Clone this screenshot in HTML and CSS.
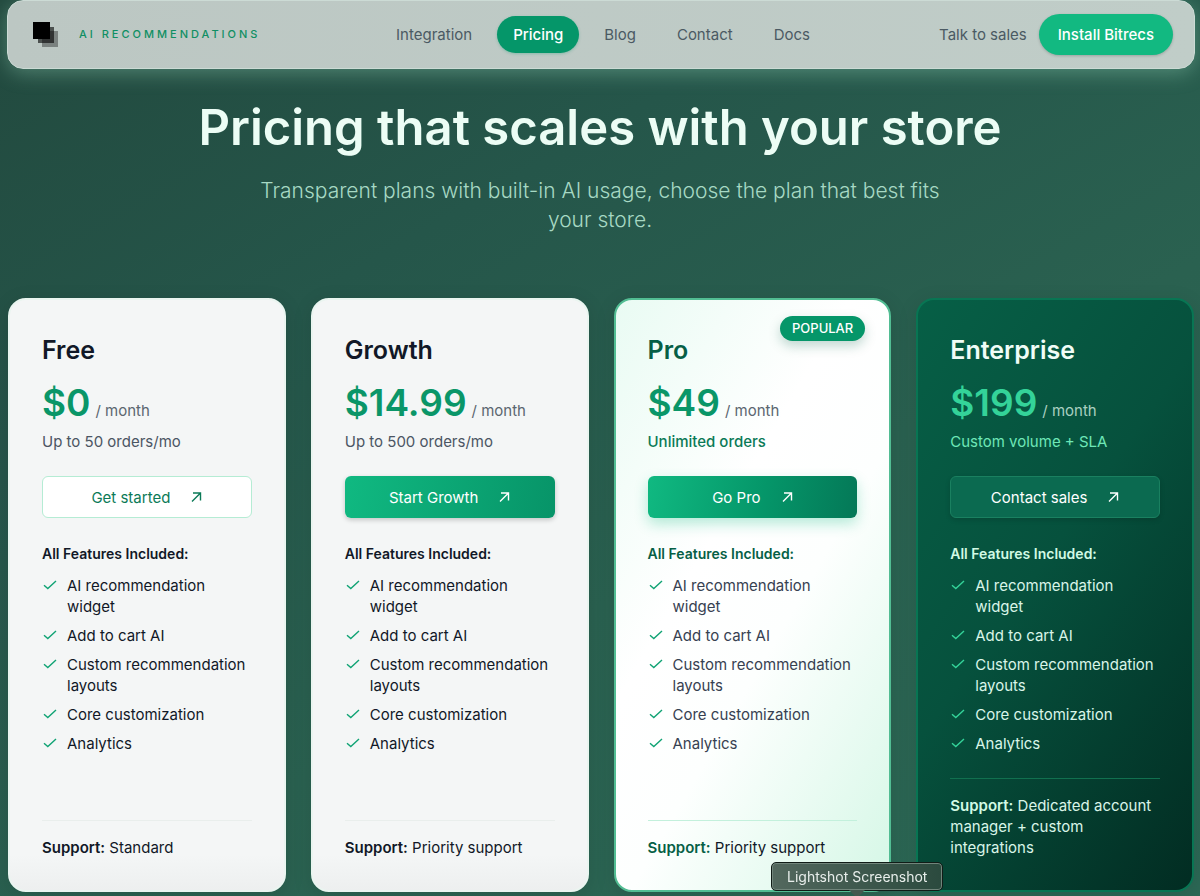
FILE: index.html
```html
<!DOCTYPE html>
<html lang="en">
<head>
  <meta charset="UTF-8">
  <meta name="viewport" content="width=device-width, initial-scale=1.0">
  <title>Pricing - Bitrecs</title>
  <link rel="stylesheet" href="styles.css">
</head>
<body>
  <svg class="sprite" aria-hidden="true">
    <symbol id="arrow" viewBox="0 0 12 12">
      <path d="M2 10.5 10 2.5M3 2h7.5v7.5" fill="none" stroke="currentColor" stroke-width="1.4"/>
    </symbol>
    <symbol id="check" viewBox="0 0 16 16">
      <path d="M2 8.2 5.8 11.6 14 4" fill="none" stroke="currentColor" stroke-width="1.4"/>
    </symbol>
  </svg>

  <header class="navbar">
    <a class="brand" href="#">
      <svg class="logo" viewBox="0 0 26 26" aria-hidden="true">
        <rect x="9" y="9" width="16" height="16" fill="#000" opacity="0.35"/>
        <rect x="5" y="5" width="16" height="16" fill="#000" opacity="0.6"/>
        <rect x="0" y="0" width="17" height="17" fill="#000"/>
      </svg>
      <span class="brand-text">AI RECOMMENDATIONS</span>
    </a>
    <nav class="nav-links">
      <a href="#">Integration</a>
      <a href="#" class="active">Pricing</a>
      <a href="#">Blog</a>
      <a href="#">Contact</a>
      <a href="#">Docs</a>
    </nav>
    <div class="nav-actions">
      <a href="#">Talk to sales</a>
      <a href="#" class="install">Install Bitrecs</a>
    </div>
  </header>

  <main>
    <section class="hero">
      <h1>Pricing that scales with your store</h1>
      <p>Transparent plans with built-in AI usage, choose the plan that best fits your store.</p>
    </section>

    <section class="plans">
      <article class="card">
        <h2>Free</h2>
        <div class="price"><strong>$0</strong><span>/ month</span></div>
        <p class="volume">Up to 50 orders/mo</p>
        <button type="button" class="cta cta-outline">Get started <svg><use href="#arrow"/></svg></button>
        <h3>All Features Included:</h3>
        <ul>
          <li><svg><use href="#check"/></svg><span>AI recommendation widget</span></li>
          <li><svg><use href="#check"/></svg><span>Add to cart AI</span></li>
          <li><svg><use href="#check"/></svg><span>Custom recommendation layouts</span></li>
          <li><svg><use href="#check"/></svg><span>Core customization</span></li>
          <li><svg><use href="#check"/></svg><span>Analytics</span></li>
        </ul>
        <p class="support"><b>Support:</b> Standard</p>
      </article>

      <article class="card">
        <h2>Growth</h2>
        <div class="price"><strong>$14.99</strong><span>/ month</span></div>
        <p class="volume">Up to 500 orders/mo</p>
        <button type="button" class="cta cta-growth">Start Growth <svg><use href="#arrow"/></svg></button>
        <h3>All Features Included:</h3>
        <ul>
          <li><svg><use href="#check"/></svg><span>AI recommendation widget</span></li>
          <li><svg><use href="#check"/></svg><span>Add to cart AI</span></li>
          <li><svg><use href="#check"/></svg><span>Custom recommendation layouts</span></li>
          <li><svg><use href="#check"/></svg><span>Core customization</span></li>
          <li><svg><use href="#check"/></svg><span>Analytics</span></li>
        </ul>
        <p class="support"><b>Support:</b> Priority support</p>
      </article>

      <article class="card card-pro">
        <span class="badge">POPULAR</span>
        <h2>Pro</h2>
        <div class="price"><strong>$49</strong><span>/ month</span></div>
        <p class="volume">Unlimited orders</p>
        <button type="button" class="cta cta-pro">Go Pro <svg><use href="#arrow"/></svg></button>
        <h3>All Features Included:</h3>
        <ul>
          <li><svg><use href="#check"/></svg><span>AI recommendation widget</span></li>
          <li><svg><use href="#check"/></svg><span>Add to cart AI</span></li>
          <li><svg><use href="#check"/></svg><span>Custom recommendation layouts</span></li>
          <li><svg><use href="#check"/></svg><span>Core customization</span></li>
          <li><svg><use href="#check"/></svg><span>Analytics</span></li>
        </ul>
        <p class="support"><b>Support:</b> Priority support</p>
      </article>

      <article class="card card-enterprise">
        <h2>Enterprise</h2>
        <div class="price"><strong>$199</strong><span>/ month</span></div>
        <p class="volume">Custom volume + SLA</p>
        <button type="button" class="cta cta-enterprise">Contact sales <svg><use href="#arrow"/></svg></button>
        <h3>All Features Included:</h3>
        <ul>
          <li><svg><use href="#check"/></svg><span>AI recommendation widget</span></li>
          <li><svg><use href="#check"/></svg><span>Add to cart AI</span></li>
          <li><svg><use href="#check"/></svg><span>Custom recommendation layouts</span></li>
          <li><svg><use href="#check"/></svg><span>Core customization</span></li>
          <li><svg><use href="#check"/></svg><span>Analytics</span></li>
        </ul>
        <p class="support"><b>Support:</b> Dedicated account manager + custom integrations</p>
      </article>
    </section>
  </main>

  <div class="tooltip" role="tooltip">Lightshot Screenshot</div>
</body>
</html>
```
FILE: styles.css
```css
* {
  box-sizing: border-box;
}

body, h1, h2, h3, p, ul {
  margin: 0;
  padding: 0;
}

body {
  min-height: 100vh;
  font-family: Inter, "Open Sans", sans-serif;
  font-size: 15px;
  line-height: 21px;
  color: #111827;
  background: linear-gradient(150deg, #22493e 0%, #25564a 30%, #2a6150 60%, #2c6855 100%);
}

a {
  color: inherit;
  text-decoration: none;
}

.sprite {
  position: absolute;
  width: 0;
  height: 0;
}

/* Navbar */
.navbar {
  display: grid;
  grid-template-columns: 1fr auto 1fr;
  align-items: center;
  height: 69px;
  margin: 0 5px 0 7px;
  padding: 0 21px 0 25px;
  background: linear-gradient(90deg, #bcc7c3, #c0cdc8);
  border: 1px solid #ccdbd5;
  border-radius: 16px;
  box-shadow: 0 4px 20px rgba(167, 230, 200, 0.35);
  color: #4b5a63;
}
.brand {
  display: flex;
  align-items: center;
  gap: 20px;
}
.logo {
  width: 26px;
  height: 26px;
}
.brand-text {
  font-size: 11px;
  font-weight: 500;
  letter-spacing: 3px;
  color: #0f8f63;
}
.nav-links {
  display: flex;
  gap: 9px;
}
.nav-links a {
  padding: 8px 16px;
  border-radius: 20px;
}
.nav-links .active {
  background: #059669;
  color: #fff;
  font-weight: 500;
  box-shadow: 0 1px 3px rgba(5, 150, 105, 0.3);
}
.nav-actions {
  display: flex;
  align-items: center;
  justify-content: flex-end;
  gap: 12px;
}
.install {
  padding: 10px 19px;
  border-radius: 21px;
  background: #12b981;
  color: #fff;
  font-weight: 500;
  box-shadow: 0 1px 3px rgba(0, 0, 0, 0.2);
}

/* Hero */
.hero {
  padding: 29px 16px 64px;
  text-align: center;
}
.hero h1 {
  font-size: 49px;
  line-height: 60px;
  font-weight: 600;
  color: #ecfdf5;
}
.hero p {
  max-width: 700px;
  margin: 18px auto 0;
  font-size: 21px;
  line-height: 29px;
  font-weight: 300;
  color: #a7d9c4;
}

/* Plans */
.plans {
  display: grid;
  grid-template-columns: repeat(4, 1fr);
  gap: 25px;
  padding: 0 6px 4px 8px;
}
.card {
  position: relative;
  display: flex;
  flex-direction: column;
  padding: 32px;
  border: 2px solid #eaf5f0;
  border-radius: 18px;
  background: linear-gradient(#f4f6f6 94%, #edefef);
  box-shadow: 0 4px 20px rgba(0, 0, 0, 0.1);
}
.card h2 {
  font-size: 25px;
  line-height: 36px;
  font-weight: 600;
}
.price {
  display: flex;
  align-items: baseline;
  gap: 5px;
  margin-top: 14px;
}
.price strong {
  font-size: 37px;
  line-height: 42px;
  font-weight: 600;
  color: #0a9668;
}
.price span {
  color: #5b6670;
}
.volume {
  margin-top: 7px;
  color: #4b5563;
}
.cta {
  display: flex;
  align-items: center;
  justify-content: center;
  gap: 20px;
  height: 42px;
  margin-top: 24px;
  border: none;
  border-radius: 6px;
  font: inherit;
  color: #fff;
  cursor: pointer;
}
.cta svg {
  width: 12px;
  height: 12px;
}
.cta-outline {
  background: #fff;
  border: 1px solid #b5ecd4;
  color: #0b7a57;
}
.cta-growth {
  background: linear-gradient(100deg, #10b981, #079468);
  box-shadow: 0 2px 5px rgba(0, 0, 0, 0.2);
}
.cta-pro {
  background: linear-gradient(100deg, #10b981, #059669 55%, #047857);
  box-shadow: 0 6px 14px rgba(16, 185, 129, 0.3);
}
.cta-enterprise {
  background: #0b6a50;
  border: 1px solid #1a8060;
  box-shadow: 0 2px 5px rgba(0, 0, 0, 0.15);
}
.card h3 {
  margin-top: 25px;
  font-size: 14px;
  font-weight: 600;
}
.card ul {
  display: grid;
  gap: 8px;
  margin: 11px 0 24px;
  list-style: none;
}
.card li {
  display: flex;
  gap: 9px;
}
.card li svg {
  flex: none;
  width: 16px;
  height: 16px;
  margin-top: 2px;
  color: #10a374;
}
.support {
  margin-top: auto;
  padding-top: 16px;
  border-top: 1px solid #e9eeec;
}
.support b {
  font-weight: 600;
}

/* Pro */
.card-pro {
  border-color: #52bd93;
  background: linear-gradient(120deg, #e9fbf3 0%, #fff 38%, #fdfffe 58%, #d5f7e6 100%);
}
.card-pro h2,
.card-pro h3,
.card-pro .support b {
  color: #065f46;
}
.card-pro .volume {
  color: #0b7a57;
  font-weight: 500;
}
.card-pro li {
  color: #374151;
}
.card-pro .support {
  border-color: #c3f0dc;
}
.badge {
  position: absolute;
  top: 16px;
  right: 24px;
  padding: 2px 12px;
  border-radius: 13px;
  background: #059669;
  color: #fff;
  font-size: 13px;
  font-weight: 500;
  box-shadow: 0 5px 12px rgba(6, 95, 70, 0.25);
}

/* Enterprise */
.card-enterprise {
  border-color: #087553;
  background: linear-gradient(125deg, #065f46 0%, #06513d 45%, #022c22 100%);
  color: #d9f5e8;
}
.card-enterprise h2 {
  color: #f0fdf7;
}
.card-enterprise h3,
.card-enterprise .support b {
  color: #d1fae5;
}
.card-enterprise .price strong {
  color: #34d399;
}
.card-enterprise .price span {
  color: #a9d0c1;
}
.card-enterprise .volume {
  color: #6ee7b7;
}
.card-enterprise li svg {
  color: #34d399;
}
.card-enterprise .support {
  border-color: #11704f;
}

/* Tooltip */
.tooltip {
  position: fixed;
  left: 771px;
  bottom: 5px;
  padding: 3px 15px;
  border: 1px solid #101c17;
  border-radius: 5px;
  background: linear-gradient(90deg, #53685e, #2b4a3e);
  box-shadow: inset 0 0 0 1px #71857b;
  color: #e8eeeb;
  font-size: 14px;
}
.tooltip::after {
  content: "";
  position: absolute;
  top: 100%;
  left: 50%;
  margin-left: -8px;
  border: 8px solid transparent;
  border-top-color: #44594f;
}
```
